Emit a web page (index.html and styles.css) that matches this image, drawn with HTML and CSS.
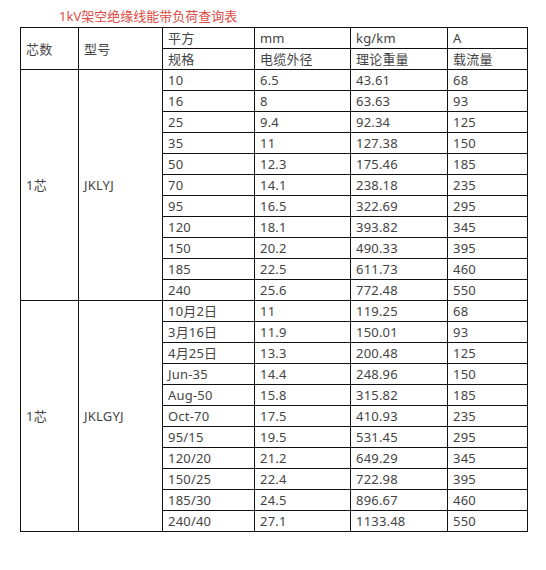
FILE: index.html
```html
<!DOCTYPE html>
<html lang="zh">
<head>
<meta charset="utf-8">
<title>1kV架空绝缘线能带负荷查询表</title>
<link rel="stylesheet" href="styles.css">
</head>
<body>
<div class="title">1kV架空绝缘线能带负荷查询表</div>
<table class="grid">
  <colgroup>
    <col class="c1"><col class="c2"><col class="c3"><col class="c4"><col class="c5"><col class="c6">
  </colgroup>
  <tbody>
    <tr><td rowspan="2">芯数</td><td rowspan="2">型号</td><td>平方</td><td>mm</td><td>kg/km</td><td>A</td></tr>
    <tr><td>规格</td><td>电缆外径</td><td>理论重量</td><td>载流量</td></tr>
    <tr><td rowspan="11">1芯</td><td rowspan="11">JKLYJ</td><td>10</td><td>6.5</td><td>43.61</td><td>68</td></tr>
    <tr><td>16</td><td>8</td><td>63.63</td><td>93</td></tr>
    <tr><td>25</td><td>9.4</td><td>92.34</td><td>125</td></tr>
    <tr><td>35</td><td>11</td><td>127.38</td><td>150</td></tr>
    <tr><td>50</td><td>12.3</td><td>175.46</td><td>185</td></tr>
    <tr><td>70</td><td>14.1</td><td>238.18</td><td>235</td></tr>
    <tr><td>95</td><td>16.5</td><td>322.69</td><td>295</td></tr>
    <tr><td>120</td><td>18.1</td><td>393.82</td><td>345</td></tr>
    <tr><td>150</td><td>20.2</td><td>490.33</td><td>395</td></tr>
    <tr><td>185</td><td>22.5</td><td>611.73</td><td>460</td></tr>
    <tr><td>240</td><td>25.6</td><td>772.48</td><td>550</td></tr>
    <tr><td rowspan="11">1芯</td><td rowspan="11">JKLGYJ</td><td>10月2日</td><td>11</td><td>119.25</td><td>68</td></tr>
    <tr><td>3月16日</td><td>11.9</td><td>150.01</td><td>93</td></tr>
    <tr><td>4月25日</td><td>13.3</td><td>200.48</td><td>125</td></tr>
    <tr><td>Jun-35</td><td>14.4</td><td>248.96</td><td>150</td></tr>
    <tr><td>Aug-50</td><td>15.8</td><td>315.82</td><td>185</td></tr>
    <tr><td>Oct-70</td><td>17.5</td><td>410.93</td><td>235</td></tr>
    <tr><td>95/15</td><td>19.5</td><td>531.45</td><td>295</td></tr>
    <tr><td>120/20</td><td>21.2</td><td>649.29</td><td>345</td></tr>
    <tr><td>150/25</td><td>22.4</td><td>722.98</td><td>395</td></tr>
    <tr><td>185/30</td><td>24.5</td><td>896.67</td><td>460</td></tr>
    <tr><td>240/40</td><td>27.1</td><td>1133.48</td><td>550</td></tr>
  </tbody>
</table>
</body>
</html>
```

FILE: styles.css
```css
html, body {
  margin: 0;
  padding: 0;
  background: #fff;
}
body {
  font-family: "Noto Sans", "Noto Sans CJK SC", sans-serif;
  color: #444;
}
.title {
  height: 27px;
  box-sizing: border-box;
  padding: 6px 0 0 59px;
  font-size: 13px;
  line-height: 21px;
  color: #dc4b45;
}
.grid {
  margin-left: 20px;
  border-collapse: collapse;
  table-layout: fixed;
  width: 508px;
  font-size: 13px;
}
.c1 { width: 58px; }
.c2 { width: 84px; }
.c3 { width: 92px; }
.c4 { width: 96px; }
.c5 { width: 97px; }
.c6 { width: 80px; }
.grid td {
  border: 1px solid #111;
  height: 20px;
  padding: 0 0 0 5px;
  line-height: 16px;
  letter-spacing: 0.2px;
  white-space: nowrap;
  vertical-align: middle;
}
```
